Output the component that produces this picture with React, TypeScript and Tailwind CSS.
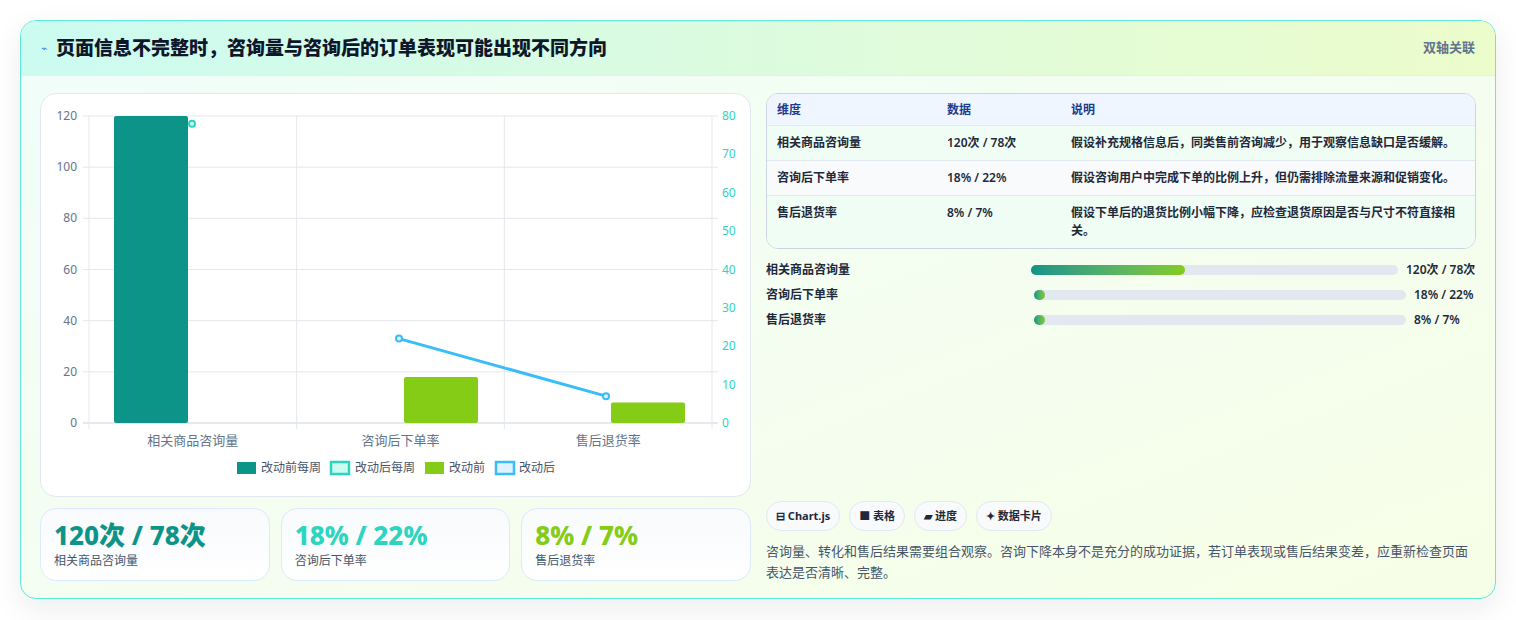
const font = { fontFamily: '"Noto Sans", "Noto Sans CJK SC", sans-serif' };

const rows = [
  { name: "相关商品咨询量", value: "120次 / 78次", note: "假设补充规格信息后，同类售前咨询减少，用于观察信息缺口是否缓解。", pct: 42 },
  { name: "咨询后下单率", value: "18% / 22%", note: "假设咨询用户中完成下单的比例上升，但仍需排除流量来源和促销变化。", pct: 3 },
  { name: "售后退货率", value: "8% / 7%", note: "假设下单后的退货比例小幅下降，应检查退货原因是否与尺寸不符直接相关。", pct: 3 },
];

function Chart() {
  const L = 48, R = 671, T = 22, B = 329;
  const h = B - T;
  const cw = (R - L) / 3;
  const yl = (v: number) => B - (v / 120) * h;
  const yr = (v: number) => B - (v / 80) * h;
  return (
    <svg width="709" height="400" viewBox="0 0 709 400" className="block">
      {[0, 20, 40, 60, 80, 100, 120].map((v) => (
        <g key={v}>
          <line x1={L - 6} x2={R + 6} y1={yl(v)} y2={yl(v)} stroke={v === 0 ? "#cbd5e1" : "#e5e7eb"} />
          <text x={L - 12} y={yl(v) + 4} textAnchor="end" fontSize="12" fill="#64748b">{v}</text>
        </g>
      ))}
      {[0, 10, 20, 30, 40, 50, 60, 70, 80].map((v) => (
        <text key={v} x={R + 10} y={yr(v) + 4} fontSize="12" fill="#2dd4bf">{v}</text>
      ))}
      {[0, 1, 2, 3].map((i) => (
        <line key={i} x1={L + i * cw} x2={L + i * cw} y1={T} y2={B + 6} stroke="#e5e7eb" />
      ))}
      <rect x={73} y={yl(120)} width={74} height={B - yl(120)} fill="#0d9488" rx="2" />
      <rect x={363} y={yl(18)} width={74} height={B - yl(18)} fill="#84cc16" rx="2" />
      <rect x={570} y={yl(8)} width={74} height={B - yl(8)} fill="#84cc16" rx="2" />
      <circle cx={151} cy={yr(78)} r="3" fill="#ccfbf1" stroke="#2dd4bf" strokeWidth="2" />
      <line x1={358} y1={yr(22)} x2={565} y2={yr(7)} stroke="#38bdf8" strokeWidth="3" />
      <circle cx={358} cy={yr(22)} r="3" fill="#e0f2fe" stroke="#38bdf8" strokeWidth="2" />
      <circle cx={565} cy={yr(7)} r="3" fill="#e0f2fe" stroke="#38bdf8" strokeWidth="2" />
      {["相关商品咨询量", "咨询后下单率", "售后退货率"].map((t, i) => (
        <text key={t} x={L + cw * i + cw / 2} y={B + 22} textAnchor="middle" fontSize="13" fill="#64748b">{t}</text>
      ))}
      <g fontSize="12" fill="#475569">
        <rect x={196} y={368} width={19} height={12} fill="#0d9488" />
        <text x={220} y={378}>改动前每周</text>
        <rect x={290} y={368} width={18} height={12} fill="#ccfbf1" stroke="#2dd4bf" strokeWidth="2.5" />
        <text x={314} y={378}>改动后每周</text>
        <rect x={384} y={368} width={19} height={12} fill="#84cc16" />
        <text x={408} y={378}>改动前</text>
        <rect x={455} y={368} width={18} height={12} fill="#e0f2fe" stroke="#38bdf8" strokeWidth="2.5" />
        <text x={478} y={378}>改动后</text>
      </g>
    </svg>
  );
}

export default function App() {
  return (
    <div className="min-h-screen bg-white px-5 pt-5" style={font}>
      <div className="h-[579px] w-[1476px] overflow-hidden rounded-2xl border border-[#5eead4] bg-gradient-to-br from-[#f0fdfa] to-[#f7fee7] shadow-[0_10px_30px_rgba(15,23,42,0.08)]">
        <div className="flex h-[55px] items-center justify-between border-b border-[#d1fae5] bg-gradient-to-r from-[#ccfbf1] to-[#ecfccb] px-5">
          <div className="flex items-center gap-2">
            <span className="text-[11px] text-[#3b82f6]">⌁</span>
            <h1 className="text-[19px] font-extrabold text-[#0f172a]">页面信息不完整时，咨询量与咨询后的订单表现可能出现不同方向</h1>
          </div>
          <span className="text-[13px] font-semibold text-[#64748b]">双轴关联</span>
        </div>
        <div className="flex gap-[15px] px-[19px] pt-[17px]">
          <div className="w-[711px] shrink-0">
            <div className="h-[404px] rounded-2xl border border-[#e2e8f0] bg-white">
              <Chart />
            </div>
            <div className="mt-[11px] grid grid-cols-3 gap-[11px]">
              {[
                { v: "120次 / 78次", l: "相关商品咨询量", c: "text-[#0d9488]" },
                { v: "18% / 22%", l: "咨询后下单率", c: "text-[#2dd4bf]" },
                { v: "8% / 7%", l: "售后退货率", c: "text-[#84cc16]" },
              ].map((s) => (
                <div key={s.l} className="h-[73px] rounded-2xl border border-[#dbeafe] bg-gradient-to-b from-[#f8fafc] to-white px-[13px] pt-[9px]">
                  <div className={`text-[26px] font-extrabold leading-[34px] ${s.c}`}>{s.v}</div>
                  <div className="text-[12px] text-[#475569]">{s.l}</div>
                </div>
              ))}
            </div>
          </div>
          <div className="flex flex-1 flex-col">
            <div className="overflow-hidden rounded-xl border border-[#cbd5e1] bg-white text-[12px] text-[#1e293b]">
              <div className="grid h-[32px] grid-cols-[170px_124px_1fr] items-center border-b border-[#dbeafe] bg-[#eff6ff] px-[10px] font-semibold text-[#1e3a8a]">
                <span>维度</span><span>数据</span><span>说明</span>
              </div>
              {rows.map((r, i) => (
                <div key={r.name} className={`grid grid-cols-[170px_124px_1fr] items-start border-[#e2e8f0] px-[10px] py-[8px] font-semibold leading-[18px] ${i < 2 ? "border-b" : ""} ${i === 1 ? "bg-[#f8fafc]" : "bg-[#f0fdf4]"}`}>
                  <span>{r.name}</span><span>{r.value}</span><span>{r.note}</span>
                </div>
              ))}
            </div>
            <div className="mt-[12px] flex flex-col gap-[7px] whitespace-nowrap text-[12px] font-semibold text-[#1e293b]">
              {rows.map((r, i) => (
                <div key={r.name} className="flex h-[18px] items-center">
                  <span className="w-[265px] shrink-0">{r.name}</span>
                  <div className={`h-[10px] shrink-0 rounded-full bg-[#e2e8f0] ${i === 0 ? "w-[367px]" : "ml-[3px] w-[372px]"}`}>
                    <div className="h-full rounded-full bg-gradient-to-r from-[#0d9488] to-[#84cc16]" style={{ width: `${r.pct}%` }} />
                  </div>
                  <span className="ml-[8px]">{r.value}</span>
                </div>
              ))}
            </div>
            <div className="mt-auto flex gap-[9px] text-[11px] font-bold text-[#1e293b]">
              {["⊟ Chart.js", "■ 表格", "▰ 进度", "✦ 数据卡片"].map((c) => (
                <span key={c} className="rounded-full border border-[#e2e8f0] bg-[#f8fafc] px-[9px] py-[6px]">{c}</span>
              ))}
            </div>
            <p className="mt-[10px] mb-[-2px] text-[13px] leading-[21px] text-[#475569]">
              咨询量、转化和售后结果需要组合观察。咨询下降本身不是充分的成功证据，若订单表现或售后结果变差，应重新检查页面表达是否清晰、完整。
            </p>
          </div>
        </div>
      </div>
    </div>
  );
}
